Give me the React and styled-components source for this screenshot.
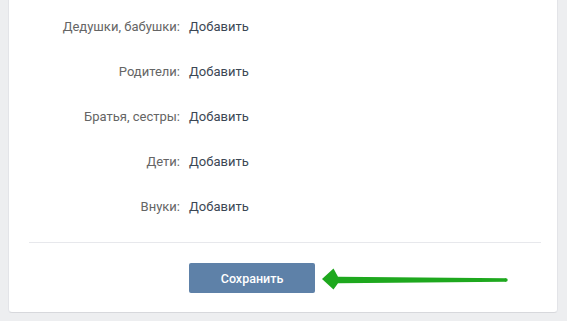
import React from "react"
import styled, { createGlobalStyle } from "styled-components"

const GlobalStyle = createGlobalStyle`
  body {
    margin: 0;
    background: #edeef0;
    font-family: Roboto, "Open Sans", "Liberation Sans", sans-serif;
  }
`

const relatives = [
  "Дедушки, бабушки:",
  "Родители:",
  "Братья, сестры:",
  "Дети:",
  "Внуки:",
]

const App = () => {
  return (
    <>
      <GlobalStyle />
      <Card>
        <Rows>
          {relatives.map((label) => (
            <Row key={label}>
              <Label>{label}</Label>
              <AddLink>Добавить</AddLink>
            </Row>
          ))}
        </Rows>
        <Divider />
        <Footer>
          <SaveButton>Сохранить</SaveButton>
          <Arrow width="188" height="22" viewBox="0 0 188 22">
            <path
              d="M1 11 L12.5 0.5 L17 8.8 L185 10.3 L185 13.7 L17 15.2 L12.5 21.5 Z"
              fill="#1ea81e"
            />
            <circle cx="185" cy="12" r="1.7" fill="#1ea81e" />
          </Arrow>
        </Footer>
      </Card>
    </>
  )
}

export default App

const Card = styled.div`
  margin: 0 9px 0 8px;
  background: #fff;
  border: 1px solid #e3e4e8;
  border-top: none;
  border-bottom-color: #d7d8dc;
  border-radius: 0 0 4px 4px;
  padding: 18px 16px 19px 20px;
  height: 313px;
  box-sizing: border-box;
`

const Rows = styled.div`
  display: flex;
  flex-direction: column;
  gap: 27px;
`

const Row = styled.div`
  display: grid;
  grid-template-columns: 151px 1fr;
  column-gap: 9px;
  font-size: 13px;
  line-height: 18px;
`

const Label = styled.div`
  text-align: right;
  color: #656565;
`

const AddLink = styled.div`
  color: #3c4754;
  cursor: pointer;
`

const Divider = styled.div`
  height: 1px;
  background: #e7e8ec;
  margin: 26px 0 20px;
`

const Footer = styled.div`
  display: flex;
  align-items: center;
  padding-left: 160px;
`

const SaveButton = styled.button`
  width: 126px;
  height: 30px;
  border: 0;
  border-radius: 2px;
  background: #5e81a8;
  color: #fff;
  font-family: Roboto, "Open Sans", "Liberation Sans", sans-serif;
  font-size: 12.5px;
  font-weight: 500;
  cursor: pointer;
  padding: 0;
`

const Arrow = styled.svg`
  display: block;
  margin-left: 6px;
  margin-top: 1px;
`
